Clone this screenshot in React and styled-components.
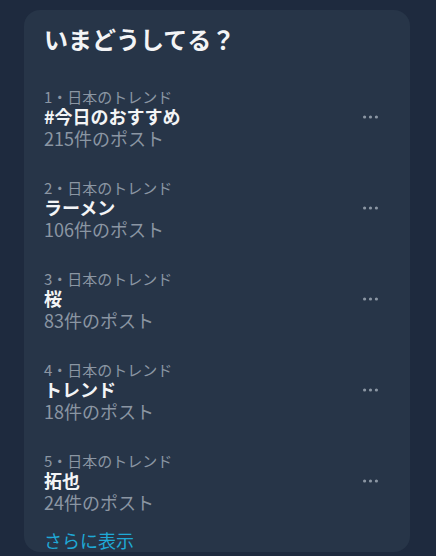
import styled, { createGlobalStyle } from "styled-components";

const GlobalStyle = createGlobalStyle`
  html, body {
    margin: 0;
    padding: 0;
    background: #1e2a3e;
  }
  body {
    font-family: "Noto Sans CJK JP", "Noto Sans", sans-serif;
  }
`;

const Page = styled.div`
  padding: 10px 26px 0 24px;
  height: 556px;
  box-sizing: border-box;
  overflow: hidden;
`;

const Card = styled.section`
  background: #273548;
  border-radius: 16px;
  height: 542px;
  overflow: hidden;
  display: flex;
  flex-direction: column;
`;

const Title = styled.h2`
  margin: 11px 0 16px;
  padding: 0 20px;
  font-size: 24px;
  line-height: 36px;
  font-weight: 700;
  color: #f3f4f6;
`;

const Row = styled.div`
  display: flex;
  align-items: flex-start;
  justify-content: space-between;
  padding: 15px 32px 15px 20px;
`;

const Info = styled.div`
  display: flex;
  flex-direction: column;
`;

const Label = styled.span`
  font-size: 15px;
  line-height: 18px;
  color: #8b96a3;
`;

const Name = styled.span`
  font-size: 18px;
  line-height: 21px;
  font-weight: 700;
  color: #f3f4f6;
`;

const Count = styled.span`
  font-size: 18px;
  line-height: 22px;
  color: #8b96a3;
`;

const More = styled.button`
  background: none;
  border: none;
  padding: 0;
  margin-top: 27px;
  width: 15px;
  height: 4px;
  display: flex;
  cursor: pointer;
`;

const ShowMore = styled.a`
  padding: 0 20px;
  font-size: 18px;
  line-height: 25px;
  color: #1fa9d6;
  text-decoration: none;
`;

const trends = [
  { rank: 1, name: "#今日のおすすめ", posts: 215 },
  { rank: 2, name: "ラーメン", posts: 106 },
  { rank: 3, name: "桜", posts: 83 },
  { rank: 4, name: "トレンド", posts: 18 },
  { rank: 5, name: "拓也", posts: 24 },
];

const Dots = () => (
  <svg width="15" height="4" viewBox="0 0 15 4">
    <circle cx="1.6" cy="2" r="1.6" fill="#8b96a3" />
    <circle cx="7.5" cy="2" r="1.6" fill="#8b96a3" />
    <circle cx="13.4" cy="2" r="1.6" fill="#8b96a3" />
  </svg>
);

const App = () => {
  return (
    <>
      <GlobalStyle />
      <Page>
        <Card>
          <Title>いまどうしてる？</Title>
          {trends.map((t) => (
            <Row key={t.rank}>
              <Info>
                <Label>{t.rank}・日本のトレンド</Label>
                <Name>{t.name}</Name>
                <Count>{t.posts}件のポスト</Count>
              </Info>
              <More aria-label="その他">
                <Dots />
              </More>
            </Row>
          ))}
          <ShowMore href="#">さらに表示</ShowMore>
        </Card>
      </Page>
    </>
  );
};

export default App;
